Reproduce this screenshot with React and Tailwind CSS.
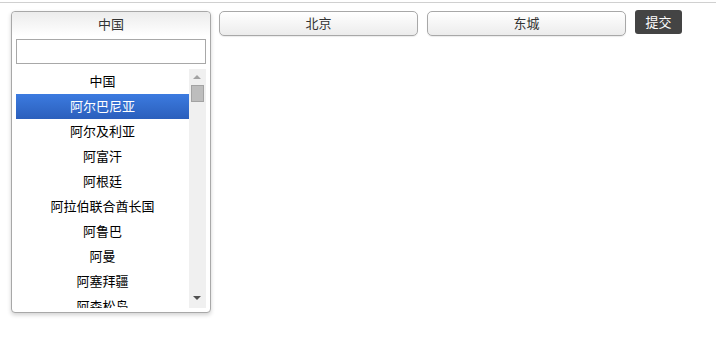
import React from "react";

const items = [
  "中国",
  "阿尔巴尼亚",
  "阿尔及利亚",
  "阿富汗",
  "阿根廷",
  "阿拉伯联合酋长国",
  "阿鲁巴",
  "阿曼",
  "阿塞拜疆",
  "阿森松岛",
];

const font = { fontFamily: '"Noto Sans CJK SC", "Liberation Sans", sans-serif' };

export default function App() {
  return (
    <div className="w-[716px] h-[364px] bg-white" style={font}>
      <div className="h-[2px]" />
      <div className="h-px bg-[#d0d0d0]" />
      <div className="flex items-start pl-[11px] pt-[8px]">
        {/* dropdown */}
        <div className="w-[200px] h-[302px] border border-[#a8a8a8] rounded-[4px] bg-white shadow-[0_2px_4px_rgba(0,0,0,0.18)] flex flex-col">
          <div className="h-[24px] pb-[1px] flex items-center justify-center text-[13px] text-[#333] rounded-t-[4px] bg-gradient-to-b from-[#ececec] to-white">
            中国
          </div>
          <div className="px-[4px] pt-[3px]">
            <div className="h-[25px] border border-[#a8a8a8] bg-white" />
          </div>
          <div className="flex pl-[4px] pr-[4px] pt-[5px]">
            <div className="w-[173px] h-[239px] overflow-hidden">
              {items.map((t, i) => (
                <div
                  key={t}
                  className={
                    i === 1
                      ? "h-[25px] pb-[2px] leading-none flex items-center justify-center text-[13px] text-white bg-gradient-to-b from-[#3c7be0] to-[#2b5fbc]"
                      : "h-[25px] pb-[2px] leading-none flex items-center justify-center text-[13px] text-black"
                  }
                >
                  {t}
                </div>
              ))}
            </div>
            <div className="w-[17px] h-[239px] bg-[#f0f0f0] relative">
              <div className="absolute left-[4px] top-[6px] w-0 h-0 border-l-[4px] border-r-[4px] border-b-[4px] border-l-transparent border-r-transparent border-b-[#a3a3a3]" />
              <div className="absolute left-[2px] top-[16px] w-[13px] h-[17px] bg-[#bdbdbd] border border-[#a3a3a3]" />
              <div className="absolute left-[4px] bottom-[8px] w-0 h-0 border-l-[4px] border-r-[4px] border-t-[4px] border-l-transparent border-r-transparent border-t-[#505050]" />
            </div>
          </div>
        </div>
        {/* buttons */}
        <div className="ml-[8px] w-[199px] h-[25px] pb-[1px] border border-[#a8a8a8] rounded-[5px] bg-gradient-to-b from-white to-[#ececec] flex items-center justify-center text-[13px] text-[#333] shadow-[0_1px_1px_rgba(0,0,0,0.08)]">
          北京
        </div>
        <div className="ml-[9px] w-[199px] h-[25px] pb-[1px] border border-[#a8a8a8] rounded-[5px] bg-gradient-to-b from-white to-[#ececec] flex items-center justify-center text-[13px] text-[#333] shadow-[0_1px_1px_rgba(0,0,0,0.08)]">
          东城
        </div>
        <div className="ml-[9px] -mt-[1px] w-[47px] h-[24px] pb-[1px] rounded-[3px] bg-[#444] flex items-center justify-center text-[13px] text-white">
          提交
        </div>
      </div>
    </div>
  );
}
